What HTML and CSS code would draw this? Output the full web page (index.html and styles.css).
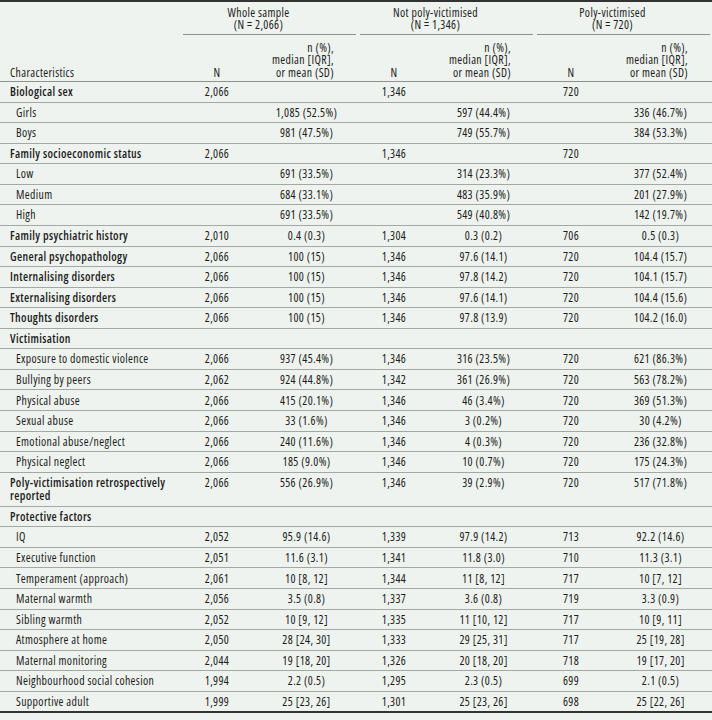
FILE: index.html
```html
<!DOCTYPE html>
<html lang="en">
<head>
<meta charset="utf-8">
<title>Characteristics table</title>
<link rel="stylesheet" href="styles.css">
</head>
<body>
<table class="stats">
  <colgroup>
    <col class="c-label">
    <col class="c-n"><col class="c-v">
    <col class="c-n"><col class="c-v">
    <col class="c-n"><col class="c-v">
  </colgroup>
  <thead>
    <tr class="head-top">
      <th class="h-label" rowspan="2">Characteristics</th>
      <th class="h-group" colspan="2"><div class="group-label">Whole sample<br>(N = 2,066)</div></th>
      <th class="h-group" colspan="2"><div class="group-label">Not poly-victimised<br>(N = 1,346)</div></th>
      <th class="h-group" colspan="2"><div class="group-label">Poly-victimised<br>(N = 720)</div></th>
    </tr>
    <tr class="head-sub">
      <th class="h-n">N</th><th class="h-v">n (%),<br>median [IQR],<br>or mean (SD)</th>
      <th class="h-n">N</th><th class="h-v">n (%),<br>median [IQR],<br>or mean (SD)</th>
      <th class="h-n">N</th><th class="h-v">n (%),<br>median [IQR],<br>or mean (SD)</th>
    </tr>
  </thead>
  <tbody>
    <tr class="main"><td class="label">Biological sex</td><td class="n">2,066</td><td class="v"></td><td class="n">1,346</td><td class="v"></td><td class="n">720</td><td class="v"></td></tr>
    <tr><td class="label sub">Girls</td><td class="n"></td><td class="v">1,085 (52.5%)</td><td class="n"></td><td class="v">597 (44.4%)</td><td class="n"></td><td class="v">336 (46.7%)</td></tr>
    <tr><td class="label sub">Boys</td><td class="n"></td><td class="v">981 (47.5%)</td><td class="n"></td><td class="v">749 (55.7%)</td><td class="n"></td><td class="v">384 (53.3%)</td></tr>
    <tr class="main"><td class="label">Family socioeconomic status</td><td class="n">2,066</td><td class="v"></td><td class="n">1,346</td><td class="v"></td><td class="n">720</td><td class="v"></td></tr>
    <tr><td class="label sub">Low</td><td class="n"></td><td class="v">691 (33.5%)</td><td class="n"></td><td class="v">314 (23.3%)</td><td class="n"></td><td class="v">377 (52.4%)</td></tr>
    <tr><td class="label sub">Medium</td><td class="n"></td><td class="v">684 (33.1%)</td><td class="n"></td><td class="v">483 (35.9%)</td><td class="n"></td><td class="v">201 (27.9%)</td></tr>
    <tr><td class="label sub">High</td><td class="n"></td><td class="v">691 (33.5%)</td><td class="n"></td><td class="v">549 (40.8%)</td><td class="n"></td><td class="v">142 (19.7%)</td></tr>
    <tr class="main"><td class="label">Family psychiatric history</td><td class="n">2,010</td><td class="v">0.4 (0.3)</td><td class="n">1,304</td><td class="v">0.3 (0.2)</td><td class="n">706</td><td class="v">0.5 (0.3)</td></tr>
    <tr class="main"><td class="label">General psychopathology</td><td class="n">2,066</td><td class="v">100 (15)</td><td class="n">1,346</td><td class="v">97.6 (14.1)</td><td class="n">720</td><td class="v">104.4 (15.7)</td></tr>
    <tr class="main"><td class="label">Internalising disorders</td><td class="n">2,066</td><td class="v">100 (15)</td><td class="n">1,346</td><td class="v">97.8 (14.2)</td><td class="n">720</td><td class="v">104.1 (15.7)</td></tr>
    <tr class="main"><td class="label">Externalising disorders</td><td class="n">2,066</td><td class="v">100 (15)</td><td class="n">1,346</td><td class="v">97.6 (14.1)</td><td class="n">720</td><td class="v">104.4 (15.6)</td></tr>
    <tr class="main"><td class="label">Thoughts disorders</td><td class="n">2,066</td><td class="v">100 (15)</td><td class="n">1,346</td><td class="v">97.8 (13.9)</td><td class="n">720</td><td class="v">104.2 (16.0)</td></tr>
    <tr class="main"><td class="label">Victimisation</td><td class="n"></td><td class="v"></td><td class="n"></td><td class="v"></td><td class="n"></td><td class="v"></td></tr>
    <tr><td class="label sub">Exposure to domestic violence</td><td class="n">2,066</td><td class="v">937 (45.4%)</td><td class="n">1,346</td><td class="v">316 (23.5%)</td><td class="n">720</td><td class="v">621 (86.3%)</td></tr>
    <tr><td class="label sub">Bullying by peers</td><td class="n">2,062</td><td class="v">924 (44.8%)</td><td class="n">1,342</td><td class="v">361 (26.9%)</td><td class="n">720</td><td class="v">563 (78.2%)</td></tr>
    <tr><td class="label sub">Physical abuse</td><td class="n">2,066</td><td class="v">415 (20.1%)</td><td class="n">1,346</td><td class="v">46 (3.4%)</td><td class="n">720</td><td class="v">369 (51.3%)</td></tr>
    <tr><td class="label sub">Sexual abuse</td><td class="n">2,066</td><td class="v">33 (1.6%)</td><td class="n">1,346</td><td class="v">3 (0.2%)</td><td class="n">720</td><td class="v">30 (4.2%)</td></tr>
    <tr><td class="label sub">Emotional abuse/neglect</td><td class="n">2,066</td><td class="v">240 (11.6%)</td><td class="n">1,346</td><td class="v">4 (0.3%)</td><td class="n">720</td><td class="v">236 (32.8%)</td></tr>
    <tr><td class="label sub">Physical neglect</td><td class="n">2,066</td><td class="v">185 (9.0%)</td><td class="n">1,346</td><td class="v">10 (0.7%)</td><td class="n">720</td><td class="v">175 (24.3%)</td></tr>
    <tr class="main"><td class="label">Poly-victimisation retrospectively reported</td><td class="n">2,066</td><td class="v">556 (26.9%)</td><td class="n">1,346</td><td class="v">39 (2.9%)</td><td class="n">720</td><td class="v">517 (71.8%)</td></tr>
    <tr class="main"><td class="label">Protective factors</td><td class="n"></td><td class="v"></td><td class="n"></td><td class="v"></td><td class="n"></td><td class="v"></td></tr>
    <tr><td class="label sub">IQ</td><td class="n">2,052</td><td class="v">95.9 (14.6)</td><td class="n">1,339</td><td class="v">97.9 (14.2)</td><td class="n">713</td><td class="v">92.2 (14.6)</td></tr>
    <tr><td class="label sub">Executive function</td><td class="n">2,051</td><td class="v">11.6 (3.1)</td><td class="n">1,341</td><td class="v">11.8 (3.0)</td><td class="n">710</td><td class="v">11.3 (3.1)</td></tr>
    <tr><td class="label sub">Temperament (approach)</td><td class="n">2,061</td><td class="v">10 [8, 12]</td><td class="n">1,344</td><td class="v">11 [8, 12]</td><td class="n">717</td><td class="v">10 [7, 12]</td></tr>
    <tr><td class="label sub">Maternal warmth</td><td class="n">2,056</td><td class="v">3.5 (0.8)</td><td class="n">1,337</td><td class="v">3.6 (0.8)</td><td class="n">719</td><td class="v">3.3 (0.9)</td></tr>
    <tr><td class="label sub">Sibling warmth</td><td class="n">2,052</td><td class="v">10 [9, 12]</td><td class="n">1,335</td><td class="v">11 [10, 12]</td><td class="n">717</td><td class="v">10 [9, 11]</td></tr>
    <tr><td class="label sub">Atmosphere at home</td><td class="n">2,050</td><td class="v">28 [24, 30]</td><td class="n">1,333</td><td class="v">29 [25, 31]</td><td class="n">717</td><td class="v">25 [19, 28]</td></tr>
    <tr><td class="label sub">Maternal monitoring</td><td class="n">2,044</td><td class="v">19 [18, 20]</td><td class="n">1,326</td><td class="v">20 [18, 20]</td><td class="n">718</td><td class="v">19 [17, 20]</td></tr>
    <tr><td class="label sub">Neighbourhood social cohesion</td><td class="n">1,994</td><td class="v">2.2 (0.5)</td><td class="n">1,295</td><td class="v">2.3 (0.5)</td><td class="n">699</td><td class="v">2.1 (0.5)</td></tr>
    <tr class="last"><td class="label sub">Supportive adult</td><td class="n">1,999</td><td class="v">25 [23, 26]</td><td class="n">1,301</td><td class="v">25 [23, 26]</td><td class="n">698</td><td class="v">25 [22, 26]</td></tr>
  </tbody>
</table>
</body>
</html>
```

FILE: styles.css
```css
html, body {
  margin: 0;
  padding: 0;
  background: #eff3ef;
}

body {
  font-family: "Open Sans", Lato, sans-serif;
  font-stretch: 80%;
  font-size: 11.8px;
  letter-spacing: 0.35px;
  line-height: 13.5px;
  color: #1c1c1c;
}

.stats {
  width: 712px;
  table-layout: fixed;
  border-collapse: collapse;
  border-top: 2px solid #333;
  border-bottom: 2px solid #333;
}

.c-label { width: 181px; }
.c-n { width: 72px; }
.c-v { width: 105px; }

th {
  font-weight: normal;
  padding: 0;
  line-height: 12.4px;
}

.h-label {
  text-align: left;
  vertical-align: bottom;
  padding: 3px 4px 3px 10px;
}

.h-group {
  padding: 0 2px;
  vertical-align: top;
}

.group-label {
  padding: 4px 22px 3px 0;
  border-bottom: 1px solid #8d928d;
  text-align: center;
}

.head-sub th {
  vertical-align: bottom;
  padding-top: 6px;
  padding-bottom: 3px;
}

.head-sub .h-n {
  text-align: center;
}

.head-sub .h-v {
  text-align: right;
  padding-right: 24px;
}

thead tr.head-sub {
  border-bottom: 1px solid #8d928d;
}

thead .h-label {
  border-bottom: 1px solid #8d928d;
}

tbody tr {
  border-bottom: 1px solid #a3a8a3;
}

tbody tr.last {
  border-bottom: 2px solid #333;
}

td {
  padding: 3.04px 0;
  vertical-align: top;
  white-space: nowrap;
}

td.label {
  padding-left: 10px;
  padding-right: 8px;
  white-space: normal;
}

td.label.sub {
  padding-left: 16px;
}

tr.main td.label {
  font-weight: 600;
}

td.n {
  text-align: center;
}

td.v {
  text-align: center;
  padding-left: 22px;
  padding-right: 20px;
}
```
